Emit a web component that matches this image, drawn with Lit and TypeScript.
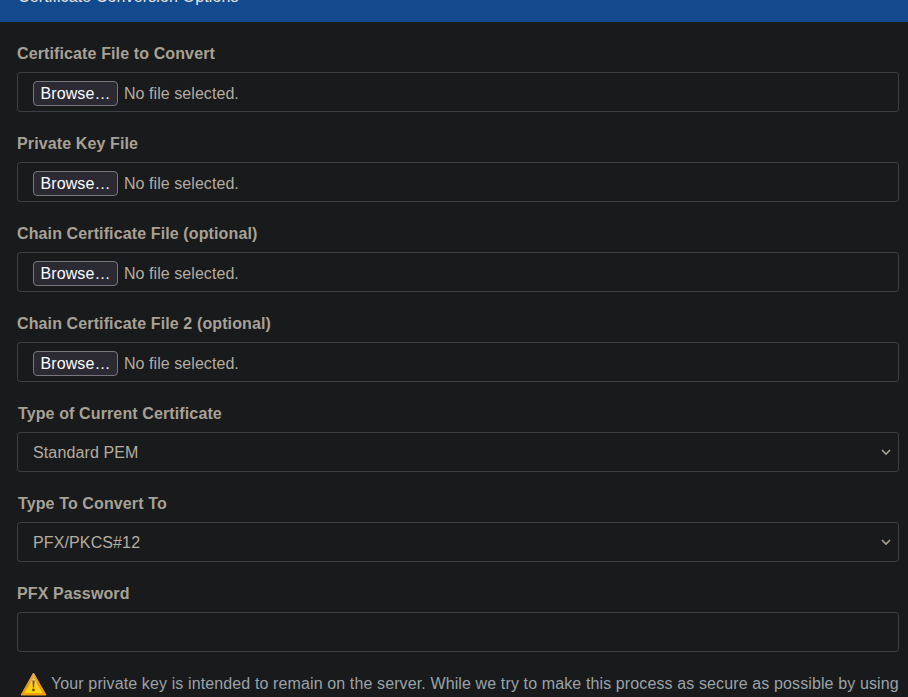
import { LitElement, html, css, svg } from "lit";
import { customElement } from "lit/decorators.js";

const chevron = svg`<svg class="chev" width="10" height="7" viewBox="0 0 10 7" fill="none"><path d="M1 1 L5 5 L9 1" stroke="#a8a195" stroke-width="1.6"/></svg>`;

@customElement("app-root")
export class AppRoot extends LitElement {
  static styles = css`
    :host { display: block; width: 908px; height: 697px; overflow: hidden; background: #191a1c; font-family: "Liberation Sans", Arial, sans-serif; font-size: 16px; color: #a8a195; letter-spacing: 0.12px; }
    .header { height: 22px; background: #134a8e; display: flex; align-items: flex-end; padding: 0 18px; box-sizing: border-box; color: #e8e6e3; line-height: 24px; overflow: hidden; }
    .header span { display: block; margin-bottom: 13px; white-space: nowrap; }
    .body { padding: 20px 9px 0 17px; display: flex; flex-direction: column; gap: 20px; }
    .group { display: flex; flex-direction: column; gap: 8px; }
    label { display: block; font-weight: 700; line-height: 24px; height: 22px; color: #a8a195; }
    label.shift { padding-left: 1px; }
    .control { height: 40px; box-sizing: border-box; border: 1px solid #3c4043; border-radius: 3px; display: flex; align-items: center; padding: 0 15px; color: #b3ada2; position: relative; }
    .control.file { padding-top: 3px; }
    .control.pick { padding-top: 2px; }
    .btn { width: 85px; height: 25px; box-sizing: border-box; background: #2b2a33; border: 1px solid #77767c; border-radius: 4px; color: #fbfbfe; display: flex; align-items: center; justify-content: center; margin-right: 6px; line-height: 1; white-space: nowrap; }
    .name { letter-spacing: 0.06px; }
    .chev { position: absolute; right: 7px; top: 16px; }
    .warn { display: flex; align-items: flex-start; padding-left: 3px; line-height: 24px; color: #9aa3a8; white-space: nowrap; }
    .warn svg { flex: none; margin: 0 4px 0 0; }
  `;

  file(label: string) {
    return html`<div class="group"><label>${label}</label><div class="control file"><span class="btn">Browse…</span><span class="name">No file selected.</span></div></div>`;
  }
  select(label: string, value: string) {
    return html`<div class="group"><label class="shift">${label}</label><div class="control pick"><span>${value}</span>${chevron}</div></div>`;
  }

  render() {
    return html`
      <div class="header"><span>Certificate Conversion Options</span></div>
      <div class="body">
        ${this.file("Certificate File to Convert")}
        ${this.file("Private Key File")}
        ${this.file("Chain Certificate File (optional)")}
        ${this.file("Chain Certificate File 2 (optional)")}
        ${this.select("Type of Current Certificate", "Standard PEM")}
        ${this.select("Type To Convert To", "PFX/PKCS#12")}
        <div class="group"><label>PFX Password</label><div class="control"></div></div>
        <div class="warn">
          <svg width="27" height="24" viewBox="0 0 27 24">
            <defs>
              <linearGradient id="o" x1="0" y1="0" x2="0" y2="1"><stop offset="0" stop-color="#e0b060"/><stop offset="0.55" stop-color="#e89a10"/><stop offset="1" stop-color="#f0a010"/></linearGradient>
              <linearGradient id="g" x1="0" y1="0" x2="0" y2="1"><stop offset="0" stop-color="#f2dc90"/><stop offset="0.55" stop-color="#f8cc20"/><stop offset="1" stop-color="#fbd800"/></linearGradient>
            </defs>
            <path d="M13.5 1 L26 23 L1 23 Z" fill="url(#o)" stroke="url(#o)" stroke-width="1" stroke-linejoin="round"/>
            <path d="M13.5 6 L22.5 21 L4.5 21 Z" fill="url(#g)"/>
            <path d="M12.4 8.5 L14.6 8.5 L14.1 15.5 L12.9 15.5 Z" fill="#7a4f10"/>
            <circle cx="13.5" cy="18" r="1.4" fill="#7a4f10"/>
          </svg>
          <span>Your private key is intended to remain on the server. While we try to make this process as secure as possible by using</span>
        </div>
      </div>
    `;
  }
}
